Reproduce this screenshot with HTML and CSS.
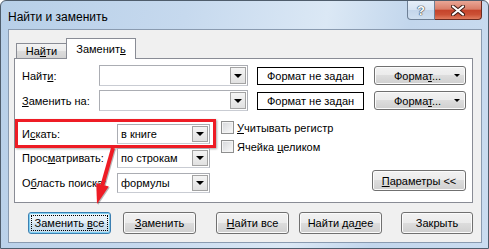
FILE: index.html
```html
<!DOCTYPE html>
<html lang="ru">
<head>
  <meta charset="UTF-8">
  <title>Найти и заменить</title>
  <link rel="stylesheet" href="styles.css">
</head>
<body>

<div class="window">
  <div class="titlebar">
    <span class="title">Найти и заменить</span>
    <div class="caption">
      <span class="cap-btn help">?</span>
      <span class="cap-btn close">
        <svg width="14" height="11" viewBox="0 0 14 11">
          <path d="M2 1.5 L12 9.5 M12 1.5 L2 9.5" stroke="#3b1a14" stroke-width="4" stroke-linecap="round"/>
          <path d="M2 1.5 L12 9.5 M12 1.5 L2 9.5" stroke="#fff" stroke-width="2.2" stroke-linecap="round"/>
        </svg>
      </span>
    </div>
  </div>

  <div class="client">
    <div class="tabs">
      <div class="tab">На<u>й</u>ти</div>
      <div class="tab active">Заменит<u>ь</u></div>
    </div>

    <div class="panel">
      <div class="row">
        <span class="lbl lbl-top">Найт<u>и</u>:</span>
        <div class="combo wide"><span class="combo-text"></span><span class="drop"></span></div>
        <div class="preview">Формат не задан</div>
        <button class="btn fmt"><span>Форма<u>т</u>...</span><span class="mini-arrow"></span></button>
      </div>
      <div class="row second">
        <span class="lbl lbl-top"><u>З</u>аменить на:</span>
        <div class="combo wide"><span class="combo-text"></span><span class="drop"></span></div>
        <div class="preview">Формат не задан</div>
        <button class="btn fmt"><span>Форма<u>т</u>...</span><span class="mini-arrow"></span></button>
      </div>

      <div class="lower">
        <div class="options">
          <div class="highlight">
            <span class="lbl lbl-mid">И<u>с</u>кать:</span>
            <div class="combo narrow"><span class="combo-text">в книге</span><span class="drop"></span></div>
          </div>
          <div class="row small">
            <span class="lbl lbl-mid">Прос<u>м</u>атривать:</span>
            <div class="combo narrow"><span class="combo-text">по строкам</span><span class="drop"></span></div>
          </div>
          <div class="row small gap">
            <span class="lbl lbl-mid">О<u>б</u>ласть поиска:</span>
            <div class="combo narrow"><span class="combo-text">формулы</span><span class="drop"></span></div>
          </div>
        </div>

        <div class="checks">
          <div class="check"><span class="box"></span><span><u>У</u>читывать регистр</span></div>
          <div class="check"><span class="box"></span><span>Ячейка <u>ц</u>еликом</span></div>
        </div>

        <button class="btn params"><u>П</u>араметры &lt;&lt;</button>
      </div>
    </div>

    <div class="actions">
      <button class="btn act default w83"><span class="focus">Заменить <u>в</u>се</span></button>
      <button class="btn act w73 ml12"><u>З</u>аменить</button>
      <button class="btn act w73 ml20"><u>Н</u>айти все</button>
      <button class="btn act w83 ml10">Найти да<u>л</u>ее</button>
      <button class="btn act w72 ml19">Закрыть</button>
    </div>
  </div>
</div>

<!-- стрелка поверх окна -->
<svg class="arrow" width="489" height="249" viewBox="0 0 489 249">
  <g fill="rgba(0,0,0,0.28)" stroke="rgba(0,0,0,0.28)">
    <line x1="114" y1="149" x2="103.5" y2="186" stroke-width="4"/>
    <polygon points="109.8,187.6 97.2,184 98,205" stroke="none"/>
  </g>
  <g fill="#ee1c25" stroke="#ee1c25">
    <line x1="113" y1="148" x2="102.5" y2="185" stroke-width="4"/>
    <polygon points="108.8,186.6 96.2,183 97,204" stroke="none"/>
  </g>
</svg>

</body>
</html>
```

FILE: styles.css
```css
body {
  margin: 0;
  font-family: 'Liberation Sans', Arial, sans-serif;
  font-size: 11px;
  color: #000;
}
.window {
  width: 489px;
  height: 249px;
  box-sizing: border-box;
  border: 1px solid #4f5d6c;
  border-radius: 6px 6px 0 0;
  background: linear-gradient(100deg, #b7cfe8 0%, #c6d9ee 35%, #dbe8f5 62%, #c2d6ec 78%, #cadcf0 100%);
  display: flex;
  flex-direction: column;
}
.titlebar {
  height: 28px;
  display: flex;
  align-items: flex-start;
}
.title {
  font-size: 12px;
  line-height: 14px;
  margin: 9px 0 0 7px;
}
.caption {
  margin-left: auto;
  margin-right: 6px;
  display: flex;
}
.cap-btn {
  height: 19px;
  box-sizing: border-box;
  display: flex;
  align-items: center;
  justify-content: center;
}
.help {
  width: 28px;
  border: 1px solid #6d7f95;
  border-top: none;
  border-radius: 0 0 0 4px;
  background: linear-gradient(#e6eef8 0%, #d6e3f2 50%, #c3d5ea 50%, #cfdff0 100%);
  color: #fff;
  font-weight: bold;
  font-size: 13px;
  text-shadow: 0 0 1px #2c3a4a, 0 0 1px #2c3a4a, 0 0 1px #2c3a4a;
}
.close {
  width: 47px;
  border: 1px solid #6b2b20;
  border-top: none;
  border-left: none;
  border-radius: 0 0 4px 0;
  background: linear-gradient(#e9a696 0%, #d97e69 45%, #c5442b 52%, #cb5035 75%, #e07c5f 100%);
}
.client {
  flex: 1;
  margin: 0 6px 5px 7px;
  border: 1px solid #8a9bb0;
  background: #f0f0f0;
  display: flex;
  flex-direction: column;
}
.tabs {
  height: 28px;
  display: flex;
  align-items: flex-end;
  padding-left: 7px;
}
.tab {
  width: 51px;
  height: 15px;
  box-sizing: border-box;
  border: 1px solid #898c95;
  border-bottom: none;
  background: linear-gradient(#f3f3f3 0%, #ebebeb 50%, #dddddd 50%, #d3d3d3 100%);
  line-height: 14px;
  text-align: center;
}
.tab.active {
  width: 70px;
  height: 21px;
  margin-left: -1px;
  margin-bottom: -1px;
  padding-top: 3px;
  background: #fff;
  position: relative;
  z-index: 1;
}
.panel {
  height: 145px;
  box-sizing: border-box;
  margin: 0 8px 0 5px;
  border: 1px solid #898c95;
  background: #fff;
  padding: 6px 6px 0 0;
}
.row {
  display: flex;
  align-items: center;
  height: 21px;
  padding-left: 7px;
}
.row.second {
  margin-top: 4px;
}
.row.small {
  height: 20px;
}
.row.gap {
  margin-top: 5px;
}
.lbl {
  white-space: nowrap;
}
.lbl-top {
  width: 77px;
}
.lbl-mid {
  width: 95px;
}
.combo {
  display: flex;
  height: 21px;
  box-sizing: border-box;
  border: 1px solid #abadb3;
  border-bottom-color: #c9ccd3;
  background: #fff;
}
.combo.wide {
  width: 149px;
}
.combo.narrow {
  width: 93px;
  height: 20px;
}
.combo-text {
  flex: 1;
  padding-left: 3px;
  display: flex;
  align-items: center;
}
.drop {
  width: 16px;
  margin: 1px;
  box-sizing: border-box;
  border: 1px solid #a3a3a3;
  background: linear-gradient(#f4f4f4, #e1e1e1);
  display: flex;
  align-items: center;
  justify-content: center;
}
.drop::after {
  content: "";
  border-top: 4px solid #000;
  border-left: 4px solid transparent;
  border-right: 4px solid transparent;
}
.preview {
  margin-left: 9px;
  width: 107px;
  height: 18px;
  box-sizing: border-box;
  border: 1px solid #000;
  line-height: 16px;
  text-align: center;
}
.btn {
  font-family: inherit;
  font-size: 11px;
  color: #000;
  padding: 0;
  box-sizing: border-box;
  border: 1px solid #707070;
  border-radius: 3px;
  background: linear-gradient(#f2f2f2 0%, #ebebeb 50%, #dddddd 50%, #cfcfcf 100%);
  box-shadow: inset 0 0 0 1px #fbfbfb;
}
.fmt {
  margin-left: 10px;
  width: 92px;
  height: 19px;
  display: flex;
  align-items: center;
  padding-left: 19px;
}
.mini-arrow {
  margin-left: auto;
  margin-right: 5px;
  border-top: 3px solid #000;
  border-left: 3px solid transparent;
  border-right: 3px solid transparent;
}
.lower {
  margin-top: 8px;
  display: flex;
}
.options {
  width: 201px;
}
.highlight {
  height: 29px;
  box-sizing: border-box;
  border: 3px solid #ee1c25;
  padding-left: 4px;
  display: flex;
  align-items: center;
  box-shadow: 1px 1px 2px rgba(0, 0, 0, 0.35);
}
.checks {
  margin-left: 5px;
  margin-top: 2px;
  display: flex;
  flex-direction: column;
  gap: 6px;
}
.check {
  display: flex;
  align-items: center;
  height: 13px;
  white-space: nowrap;
}
.box {
  width: 13px;
  height: 13px;
  box-sizing: border-box;
  margin-right: 3px;
  border: 1px solid #8e8f8f;
  background: linear-gradient(135deg, #d4d6d9, #fbfbfb);
  box-shadow: inset 0 0 0 1px #f4f4f4;
}
.params {
  margin-left: auto;
  align-self: flex-end;
  margin-bottom: 2px;
  width: 94px;
  height: 21px;
}
.actions {
  display: flex;
  margin-top: 9px;
  padding-left: 19px;
}
.act {
  height: 22px;
}
.default {
  border-color: #3c7fb1;
  background: linear-gradient(#eef6fb 0%, #e3eef7 50%, #d3e3f0 50%, #c8dbeb 100%);
  box-shadow: inset 0 0 0 1px #7fd0f2;
  padding: 2px;
}
.focus {
  display: block;
  height: 100%;
  box-sizing: border-box;
  border: 1px dotted #000;
  line-height: 14px;
  text-align: center;
}
.w83 { width: 83px; }
.w73 { width: 73px; }
.w72 { width: 72px; }
.ml10 { margin-left: 10px; }
.ml12 { margin-left: 12px; }
.ml19 { margin-left: 19px; }
.ml20 { margin-left: 20px; }
.arrow {
  position: absolute;
  left: 0;
  top: 0;
  pointer-events: none;
}
```
